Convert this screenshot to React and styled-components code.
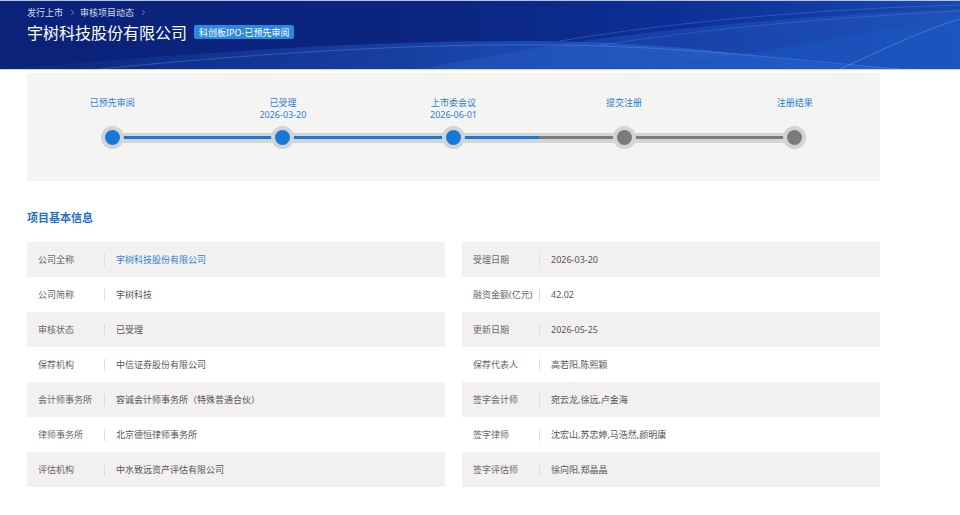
import React from "react";
import styled, { createGlobalStyle } from "styled-components";
import { ChevronRight } from "lucide-react";

const GlobalStyle = createGlobalStyle`
  html, body {
    margin: 0;
    padding: 0;
    background: #ffffff;
    font-family: "Noto Sans", "Noto Sans CJK SC", sans-serif;
  }
`;

const Page = styled.div`
  width: 960px;
  min-height: 515px;
  background: #fff;
`;

const Header = styled.header`
  position: relative;
  height: 68px;
  border-top: 1px solid #b9c2d6;
  border-bottom: 1px solid #c9d3e6;
  background: linear-gradient(90deg, #0a2278 0%, #0b2580 45%, #0d2f95 70%, #1849b0 100%);
  overflow: hidden;
`;

const Waves = styled.svg`
  position: absolute;
  inset: 0;
  width: 100%;
  height: 100%;
`;

const HeaderInner = styled.div`
  position: relative;
  padding: 5px 27px 0;
  display: flex;
  flex-direction: column;
  gap: 3px;
`;

const Crumbs = styled.div`
  display: flex;
  align-items: center;
  gap: 3px;
  height: 12px;
  font-size: 9px;
  color: #d6dcee;
  svg {
    color: #c8d0e8;
  }
`;

const Crumb = styled.span`
  margin-right: 2px;
`;

const TitleRow = styled.div`
  display: flex;
  align-items: center;
  gap: 7px;
  height: 22px;
`;

const Title = styled.h1`
  margin: 0;
  font-size: 16px;
  font-weight: 400;
  color: #ffffff;
  letter-spacing: 0;
`;

const Badge = styled.span`
  display: inline-flex;
  align-items: center;
  height: 14px;
  padding: 0 5px;
  border-radius: 2px;
  background: #2c89df;
  color: #fff;
  font-size: 9px;
`;

const Content = styled.main`
  width: 853px;
  margin: 3px 0 0 27px;
`;

const Progress = styled.section`
  display: grid;
  grid-template-columns: repeat(5, 1fr);
  padding: 24px 0 32px;
  background: #f4f4f3;
`;

const Step = styled.div`
  display: flex;
  flex-direction: column;
  align-items: stretch;
`;

const StepText = styled.div`
  height: 24px;
  margin-bottom: 5px;
  display: flex;
  flex-direction: column;
  align-items: center;
  font-size: 9px;
  line-height: 12px;
  color: #2a80d6;
`;

const Track = styled.div`
  display: flex;
  align-items: center;
  height: 23px;
`;

const Connector = styled.div`
  flex: 1;
  height: 10px;
  background: ${({ $hidden }) => ($hidden ? "transparent" : "#d4d4d4")};
  display: flex;
  align-items: center;
  &::after {
    content: "";
    flex: 1;
    height: 3px;
    background: ${({ $hidden, $done }) =>
      $hidden ? "transparent" : $done ? "#1479d9" : "#7b7b7b"};
  }
`;

const Halo = styled.div`
  width: 23px;
  height: 23px;
  flex-shrink: 0;
  border-radius: 50%;
  background: #d4d4d4;
  display: flex;
  align-items: center;
  justify-content: center;
  margin: 0 -1px;
  position: relative;
  z-index: 1;
`;

const Dot = styled.div`
  width: 15px;
  height: 15px;
  border-radius: 50%;
  background: ${({ $done }) => ($done ? "#1479d9" : "#7b7b7b")};
`;

const SectionTitle = styled.h2`
  margin: 30px 0 17px;
  font-size: 11px;
  line-height: 14px;
  font-weight: 700;
  color: #1d6fce;
`;

const InfoGrid = styled.div`
  display: grid;
  grid-template-columns: 1fr 1fr;
  column-gap: 17px;
`;

const Column = styled.div`
  display: flex;
  flex-direction: column;
`;

const Row = styled.div`
  display: flex;
  align-items: center;
  height: 35px;
  padding-left: 11px;
  background: ${({ $shaded }) => ($shaded ? "#f2f1ef" : "transparent")};
  font-size: 9px;
  color: #5f5f5f;
`;

const Label = styled.span`
  width: 66px;
  flex-shrink: 0;
  color: #666;
  white-space: nowrap;
`;

const Divider = styled.span`
  width: 1px;
  height: 12px;
  background: #dddddd;
  margin-right: 11px;
`;

const Value = styled.span`
  color: ${({ $link }) => ($link ? "#2a7ed6" : "#555")};
`;

const steps = [
  { name: "已预先审阅", date: "", done: true },
  { name: "已受理", date: "2026-03-20", done: true },
  { name: "上市委会议", date: "2026-06-01", done: true },
  { name: "提交注册", date: "", done: false },
  { name: "注册结果", date: "", done: false },
];

const leftInfo = [
  ["公司全称", "宇树科技股份有限公司", true],
  ["公司简称", "宇树科技"],
  ["审核状态", "已受理"],
  ["保荐机构", "中信证券股份有限公司"],
  ["会计师事务所", "容诚会计师事务所（特殊普通合伙）"],
  ["律师事务所", "北京德恒律师事务所"],
  ["评估机构", "中水致远资产评估有限公司"],
];

const rightInfo = [
  ["受理日期", "2026-03-20"],
  ["融资金额(亿元)", "42.02"],
  ["更新日期", "2026-05-25"],
  ["保荐代表人", "高若阳,陈熙颖"],
  ["签字会计师", "宛云龙,徐远,卢金海"],
  ["签字律师", "沈宏山,苏忠婷,马浩然,颜明康"],
  ["签字评估师", "徐向阳,郑晶晶"],
];

function InfoColumn({ items }) {
  return (
    <Column>
      {items.map(([label, value, link], i) => (
        <Row key={label} $shaded={i % 2 === 0}>
          <Label>{label}</Label>
          <Divider />
          <Value $link={link}>{value}</Value>
        </Row>
      ))}
    </Column>
  );
}

export default function App() {
  return (
    <Page>
      <GlobalStyle />
      <Header>
        <Waves viewBox="0 0 960 68" preserveAspectRatio="none">
          <defs>
            <linearGradient id="w1" x1="0" y1="0" x2="1" y2="0">
              <stop offset="0" stopColor="#2a66d0" stopOpacity="0.05" />
              <stop offset="0.5" stopColor="#2a6ad8" stopOpacity="0.45" />
              <stop offset="1" stopColor="#3b7ee6" stopOpacity="0.6" />
            </linearGradient>
          </defs>
          <path d="M0,68 C160,56 330,40 520,40 C640,40 720,50 800,60 C860,66 900,68 960,68 Z" fill="url(#w1)" />
          <path d="M420,68 C560,40 720,18 960,8 L960,68 Z" fill="#2b63cf" opacity="0.35" />
          <path d="M640,68 C760,52 880,30 960,14 L960,68 Z" fill="#1c55c2" opacity="0.5" />
          <path d="M100,68 C260,52 420,42 560,44 C700,46 820,62 900,68" stroke="#6aa0f0" strokeOpacity="0.35" fill="none" />
          <path d="M560,40 C680,20 820,8 960,4" stroke="#7eb0ff" strokeOpacity="0.25" fill="none" />
          <path d="M600,44 C720,26 840,16 960,10" stroke="#7eb0ff" strokeOpacity="0.2" fill="none" />
          <path d="M840,68 C880,50 920,30 960,18" stroke="#8cbaff" strokeOpacity="0.35" fill="none" />
        </Waves>
        <HeaderInner>
          <Crumbs>
            <Crumb>发行上市</Crumb>
            <ChevronRight size={9} strokeWidth={1.5} />
            <Crumb>审核项目动态</Crumb>
            <ChevronRight size={9} strokeWidth={1.5} />
          </Crumbs>
          <TitleRow>
            <Title>宇树科技股份有限公司</Title>
            <Badge>科创板IPO-已预先审阅</Badge>
          </TitleRow>
        </HeaderInner>
      </Header>
      <Content>
        <Progress>
          {steps.map((s, i) => (
            <Step key={s.name}>
              <StepText>
                <span>{s.name}</span>
                {s.date && <span>{s.date}</span>}
              </StepText>
              <Track>
                <Connector $hidden={i === 0} $done={s.done} />
                <Halo>
                  <Dot $done={s.done} />
                </Halo>
                <Connector $hidden={i === steps.length - 1} $done={s.done} />
              </Track>
            </Step>
          ))}
        </Progress>
        <SectionTitle>项目基本信息</SectionTitle>
        <InfoGrid>
          <InfoColumn items={leftInfo} />
          <InfoColumn items={rightInfo} />
        </InfoGrid>
      </Content>
    </Page>
  );
}
